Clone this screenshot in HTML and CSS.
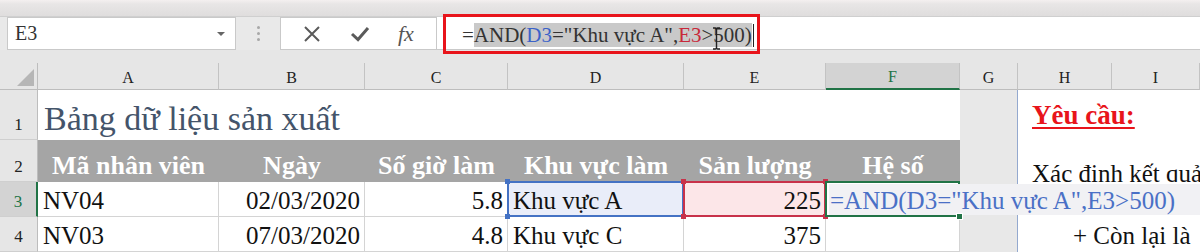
FILE: index.html
```html
<!DOCTYPE html>
<html lang="vi">
<head>
    <meta charset="UTF-8">
    <meta name="viewport" content="width=device-width, initial-scale=1.0">
    <title>Bảng dữ liệu sản xuất</title>
    <link rel="stylesheet" href="styles.css">
</head>
<body>
    <div class="ribbon-edge"></div>

    <!-- name box + formula bar -->
    <div class="formula-bar">
        <div class="name-box">
            <span>E3</span>
            <span class="drop-caret"></span>
        </div>
        <div class="grip"><span></span><span></span><span></span></div>
        <div class="fx-buttons">
            <svg class="icon icon-cancel" viewBox="0 0 18 16"><path d="M2 1 L16 15 M16 1 L2 15"/></svg>
            <svg class="icon icon-enter" viewBox="0 0 20 16"><path d="M2 8 L8 13.5 L18 2"/></svg>
            <span class="fx">fx</span>
        </div>
        <div class="formula-input">
            <div class="formula-frame">
                <span class="formula-text">=<span class="selected">AND(<span class="ref-d">D3</span>="Khu vực A",<span class="ref-e">E3</span>&gt;500)</span><span class="text-caret"></span></span>
                <svg class="ibeam" viewBox="0 0 9 23"><path d="M1 1 H3.5 Q4.5 1 4.5 3 V20 Q4.5 22 3.5 22 H1 M8 1 H5.5 Q4.5 1 4.5 3 M4.5 20 Q4.5 22 5.5 22 H8"/></svg>
            </div>
        </div>
    </div>

    <!-- worksheet -->
    <div class="sheet">
        <div class="corner"><span class="select-all"></span></div>
        <div class="col-head">A</div>
        <div class="col-head">B</div>
        <div class="col-head">C</div>
        <div class="col-head">D</div>
        <div class="col-head">E</div>
        <div class="col-head current">F</div>
        <div class="col-head">G</div>
        <div class="col-head">H</div>
        <div class="col-head">I</div>

        <div class="row-head">1</div>
        <div class="title">Bảng dữ liệu sản xuất</div>
        <div class="gap-col"></div>
        <div class="note note-title"><span>Yêu cầu:</span></div>

        <div class="row-head">2</div>
        <div class="head-cell">Mã nhân viên</div>
        <div class="head-cell">Ngày</div>
        <div class="head-cell">Số giờ làm</div>
        <div class="head-cell">Khu vực làm</div>
        <div class="head-cell">Sản lượng</div>
        <div class="head-cell">Hệ số</div>
        <div class="gap-col"></div>
        <div class="note note-task">Xác định kết quả</div>

        <div class="row-head current">3</div>
        <div class="cell">NV04</div>
        <div class="cell num">02/03/2020</div>
        <div class="cell num">5.8</div>
        <div class="cell ref ref-blue">Khu vực A<i class="dot tl"></i><i class="dot tr"></i><i class="dot bl"></i><i class="dot br"></i></div>
        <div class="cell num ref ref-red">225<i class="dot tl"></i><i class="dot tr"></i><i class="dot bl"></i><i class="dot br"></i></div>
        <div class="cell active">
            <div class="cell-editor">=AND(D3="Khu vực A",E3&gt;500)</div>
            <i class="fill-handle"></i>
        </div>
        <div class="gap-col"></div>
        <div class="note"></div>

        <div class="row-head">4</div>
        <div class="cell">NV03</div>
        <div class="cell num">07/03/2020</div>
        <div class="cell num">4.8</div>
        <div class="cell">Khu vực C</div>
        <div class="cell num">375</div>
        <div class="cell"></div>
        <div class="gap-col"></div>
        <div class="note note-rest">+ Còn lại là</div>
    </div>
</body>
</html>
```

FILE: styles.css
```css
* {
    box-sizing: border-box;
}

body {
    margin: 0;
    width: 1200px;
    height: 252px;
    overflow: hidden;
    background: #e6e6e6;
    font-family: "Liberation Serif", "Times New Roman", serif;
    color: #111;
}

.ribbon-edge {
    height: 17px;
    background: linear-gradient(#f4f0f0 0, #e8e6e6 4px, #dfdddd 100%);
    border-bottom: 1px solid #cfcfcf;
}

/* formula bar */
.formula-bar {
    display: flex;
    height: 33px;
    padding-left: 7px;
    background: #e9e9e9;
}

.name-box {
    width: 229px;
    display: flex;
    align-items: center;
    justify-content: space-between;
    padding: 0 10px 0 7px;
    background: #fff;
    border: 1px solid #c9c9c9;
    font-size: 20px;
    color: #333;
}

.drop-caret {
    border-left: 4px solid transparent;
    border-right: 4px solid transparent;
    border-top: 4px solid #666;
}

.grip {
    width: 44px;
    display: flex;
    flex-direction: column;
    align-items: center;
    justify-content: center;
    gap: 3px;
}

.grip span {
    width: 3px;
    height: 3px;
    background: #a8a8a8;
    border-radius: 50%;
}

.fx-buttons {
    width: 157px;
    display: flex;
    align-items: center;
    justify-content: space-around;
    padding: 0 8px;
    background: #fff;
    border: 1px solid #c9c9c9;
}

.icon {
    width: 18px;
    height: 16px;
    fill: none;
    stroke: #5a5a5a;
    stroke-width: 2;
}

.icon-enter {
    width: 20px;
    stroke-width: 3;
}

.fx {
    font-style: italic;
    font-size: 22px;
    color: #555;
}

.formula-input {
    flex: 1;
    padding-left: 6px;
    background: #fff;
    border-bottom: 1px solid #c9c9c9;
}

.formula-frame {
    position: relative;
    width: 317px;
    height: 40px;
    margin-top: -3px;
    padding: 0 0 4px 16px;
    display: flex;
    align-items: flex-end;
    border: 3px solid #e8141b;
    font-size: 21px;
    line-height: 1;
    color: #333;
}

.selected {
    background: #c9c9c9;
}

.ref-d {
    color: #3b62c8;
}

.ref-e {
    color: #c8283a;
}

.text-caret {
    display: inline-block;
    width: 1px;
    height: 23px;
    margin-left: 1px;
    vertical-align: -5px;
    background: #222;
}

.ibeam {
    position: absolute;
    left: 266px;
    top: 10px;
    width: 9px;
    height: 23px;
    fill: none;
    stroke: #222;
    stroke-width: 1.4;
}

/* worksheet grid */
.sheet {
    display: grid;
    grid-template-columns: 38px 181px 146px 143px 176px 142px 134px 58px 94px 1fr;
    grid-template-rows: 27px 50px 42px 35px 35px;
    margin-top: 13px;
}

.corner {
    display: flex;
    justify-content: flex-end;
    align-items: flex-end;
    padding: 0 3px 3px 0;
    border-right: 1px solid #bdbdbd;
    border-bottom: 1px solid #bdbdbd;
}

.select-all {
    width: 0;
    height: 0;
    border-left: 17px solid transparent;
    border-bottom: 17px solid #b6b6b6;
}

.col-head {
    display: flex;
    justify-content: center;
    align-items: flex-end;
    padding-bottom: 3px;
    border-right: 1px solid #c3c3c3;
    border-bottom: 1px solid #bdbdbd;
    font-size: 16px;
    line-height: 1;
    color: #222;
}

.col-head.current {
    background: #d3d3d3;
    color: #217346;
    border-bottom: 2px solid #217346;
}

.row-head {
    display: flex;
    justify-content: center;
    align-items: flex-end;
    padding-bottom: 6px;
    border-right: 1px solid #bdbdbd;
    border-bottom: 1px solid #cfcfcf;
    font-size: 17px;
    line-height: 1;
    color: #222;
}

.row-head.current {
    background: #d3d3d3;
    color: #217346;
    border-right: 2px solid #217346;
}

.title {
    grid-column: span 6;
    display: flex;
    align-items: flex-end;
    padding: 0 0 4px 6px;
    background: #fff;
    font-size: 34px;
    line-height: 1;
    color: #44546a;
}

.head-cell {
    display: flex;
    justify-content: center;
    align-items: flex-end;
    padding-bottom: 3px;
    background: #a5a5a5;
    font-size: 26px;
    font-weight: bold;
    line-height: 1;
    color: #fff;
    white-space: nowrap;
}

.gap-col {
    background: #e8e8e8;
    border-right: 1px solid #94a9cf;
}

.note {
    grid-column: span 2;
    display: flex;
    align-items: flex-end;
    padding: 0 0 4px 14px;
    background: #fff;
    font-size: 25px;
    line-height: 1;
    white-space: nowrap;
}

.note-title {
    padding-bottom: 11px;
    font-size: 27px;
    font-weight: bold;
    color: #e8141b;
}

.note-title span {
    text-decoration: underline;
    text-decoration-thickness: 2px;
    text-underline-offset: 3px;
}

.note-task {
    padding-bottom: 0;
    line-height: 0.68;
}

.note-rest {
    padding-left: 55px;
}

.cell {
    display: flex;
    align-items: flex-end;
    padding: 0 4px 3px 5px;
    background: #fff;
    border-right: 1px solid #d4d4d4;
    border-bottom: 1px solid #d4d4d4;
    font-size: 25px;
    line-height: 1;
    white-space: nowrap;
}

.num {
    justify-content: flex-end;
}

/* formula reference highlights */
.ref {
    position: relative;
}

.ref::before {
    content: "";
    position: absolute;
    inset: -1px;
    border: 2px solid var(--ref);
}

.ref-blue {
    --ref: #4472c4;
    background: #e9edf9;
}

.ref-red {
    --ref: #c8324a;
    background: #fce6e8;
}

.dot {
    position: absolute;
    z-index: 1;
    width: 5px;
    height: 5px;
    background: var(--ref);
}

.dot.tl { left: -3px; top: -3px; }
.dot.tr { right: -3px; top: -3px; }
.dot.bl { left: -3px; bottom: -3px; }
.dot.br { right: -3px; bottom: -3px; }

/* active cell in edit mode */
.active {
    position: relative;
    z-index: 3;
}

.active::before {
    content: "";
    position: absolute;
    inset: -1px;
    border: 2px solid #217346;
}

.cell-editor {
    position: absolute;
    left: 3px;
    top: 2px;
    width: 400px;
    height: 31px;
    display: flex;
    align-items: flex-end;
    padding: 0 0 2px 1px;
    background: #f1f1f4;
    font-size: 25px;
    line-height: 1;
    color: #4a70c6;
    white-space: nowrap;
}

.fill-handle {
    position: absolute;
    right: -4px;
    bottom: -4px;
    width: 7px;
    height: 7px;
    background: #217346;
    border: 1px solid #fff;
}
```
